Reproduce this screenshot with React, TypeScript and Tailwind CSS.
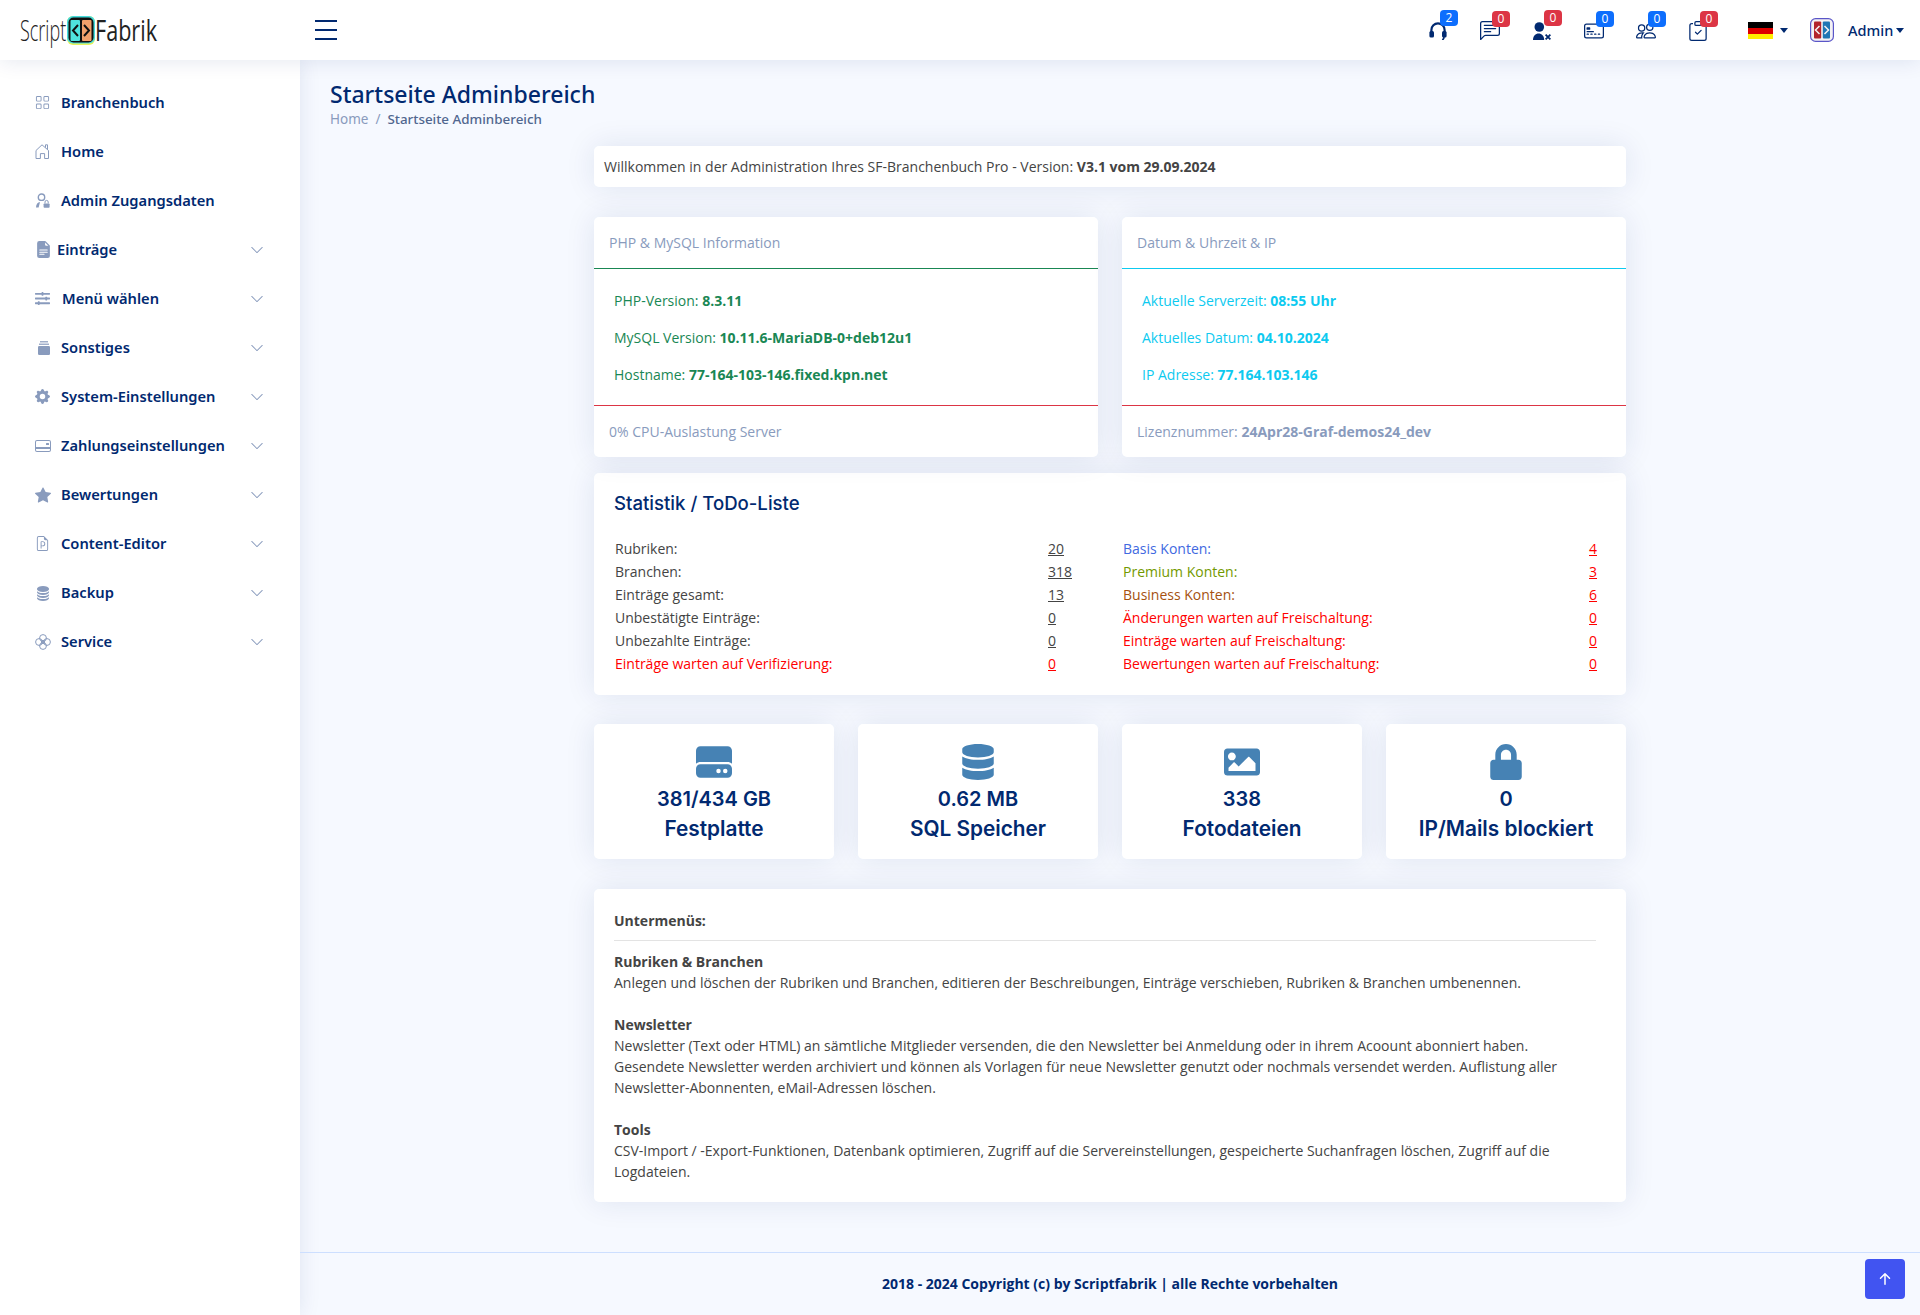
import React from "react";
import {
  BsGrid,
  BsFileEarmarkTextFill,
  BsGearFill,
  BsCreditCard2Back,
  BsStarFill,
  BsFileEarmarkPpt,
  BsDatabaseFill,
  BsChevronDown,
  BsChatLeftText,
  BsCreditCard2Front,
  BsPeople,
  BsClipboardCheck,
  BsArrowUpShort,
} from "react-icons/bs";
import { FaSlidersH, FaDatabase, FaImage, FaLock } from "react-icons/fa";
import { FaHardDrive } from "react-icons/fa6";

function HomeIcon({ size = 15 }: { size?: number }) {
  return (
    <svg viewBox="0 0 15 15" width={size} height={size} fill="none" stroke="currentColor" strokeWidth="1">
      <path d="M1 14.5V6.5L7 .8l6.5 5.7v8H9.6V9.6H5.4v4.9z" />
      <path d="M10.5 3.6V.8h2v4.6" />
    </svg>
  );
}

function PersonLockIcon({ size = 15 }: { size?: number }) {
  return (
    <svg viewBox="0 0 15 15" width={size} height={size} fill="currentColor">
      <circle cx="6.5" cy="4.2" r="3.2" fill="none" stroke="currentColor" strokeWidth="1.4" />
      <path d="M1 14.6c0-3.6 1.8-5.4 4-5.6L3.6 14.6z" />
      <rect x="8.6" y="10.4" width="6" height="4.4" rx=".8" />
      <path d="M10 10.4V9a1.6 1.6 0 0 1 3.2 0v1.4" fill="none" stroke="currentColor" strokeWidth="1" />
    </svg>
  );
}

function StackIcon({ size = 14 }: { size?: number }) {
  return (
    <svg viewBox="0 0 12 14" width={size} height={size} fill="currentColor">
      <rect x="0" y="5" width="12" height="9" rx="1.2" />
      <rect x="1" y="2.6" width="10" height="1.2" />
      <rect x="2" y="0.2" width="8" height="1.2" />
    </svg>
  );
}

function FlowerIcon({ size = 16 }: { size?: number }) {
  return (
    <svg viewBox="0 0 16 16" width={size} height={size} fill="none" stroke="currentColor" strokeWidth="1">
      <circle cx="8" cy="4" r="3.4" />
      <circle cx="8" cy="12" r="3.4" />
      <circle cx="4" cy="8" r="3.4" />
      <circle cx="12" cy="8" r="3.4" />
      <circle cx="8" cy="8" r="1.6" />
    </svg>
  );
}

function HeadsetIcon({ size = 18 }: { size?: number }) {
  return (
    <svg viewBox="0 0 18 18" width={size} height={size} fill="currentColor">
      <path d="M2.4 10V8a6.6 6.6 0 0 1 13.2 0v2" fill="none" stroke="currentColor" strokeWidth="2.2" />
      <rect x="0.4" y="9" width="4.6" height="6.5" rx="1.6" />
      <rect x="13" y="9" width="4.6" height="6.5" rx="1.6" />
      <path d="M15 15c0 1.4-.6 2.4-1.8 3" fill="none" stroke="currentColor" strokeWidth="1.6" />
    </svg>
  );
}

function PersonXIcon({ size = 18 }: { size?: number }) {
  return (
    <svg viewBox="0 0 18 18" width={size} height={size} fill="currentColor">
      <circle cx="6.3" cy="5" r="4.8" />
      <path d="M0 18c0-4 2.6-6.4 5.6-6.4s5.6 2.4 5.6 6.4z" />
      <path d="M12.6 12.6l4.8 4.8m0-4.8l-4.8 4.8" fill="none" stroke="currentColor" strokeWidth="1.8" />
    </svg>
  );
}

const navItems = [
  { label: "Branchenbuch", icon: BsGrid, box: "w-[26px]", size: 15 },
  { label: "Home", icon: HomeIcon, box: "w-[26px]", size: 15 },
  { label: "Admin Zugangsdaten", icon: PersonLockIcon, box: "w-[26px]", size: 15 },
  { label: "Einträge", icon: BsFileEarmarkTextFill, box: "w-[22px]", size: 17, sub: true },
  { label: "Menü wählen", icon: FaSlidersH, box: "w-[27px]", size: 15, sub: true },
  { label: "Sonstiges", icon: StackIcon, box: "w-[26px] pl-[2px]", size: 14, sub: true },
  { label: "System-Einstellungen", icon: BsGearFill, box: "w-[26px]", size: 15, sub: true },
  { label: "Zahlungseinstellungen", icon: BsCreditCard2Back, box: "w-[26px]", size: 16, sub: true },
  { label: "Bewertungen", icon: BsStarFill, box: "w-[26px]", size: 16, sub: true },
  { label: "Content-Editor", icon: BsFileEarmarkPpt, box: "w-[26px]", size: 15, sub: true },
  { label: "Backup", icon: BsDatabaseFill, box: "w-[26px]", size: 16, sub: true },
  { label: "Service", icon: FlowerIcon, box: "w-[26px]", size: 16, sub: true },
];

const headerIcons = [
  { icon: HeadsetIcon, count: 2, badge: "bg-[#0d6efd] top-[10px]", size: 18 },
  { icon: BsChatLeftText, count: 0, badge: "bg-[#dc3545] top-[11px]", size: 20 },
  { icon: PersonXIcon, count: 0, badge: "bg-[#dc3545] top-[10px]", size: 18 },
  { icon: BsCreditCard2Front, count: 0, badge: "bg-[#0d6efd] top-[11px]", size: 20 },
  { icon: BsPeople, count: 0, badge: "bg-[#0d6efd] top-[11px]", size: 20 },
  { icon: BsClipboardCheck, count: 0, badge: "bg-[#dc3545] top-[11px]", size: 20 },
];

const statRows = [
  { left: "Rubriken:", leftValue: "20", leftColor: "text-[#444444]", right: "Basis Konten:", rightValue: "4", rightColor: "text-[#4169e1]" },
  { left: "Branchen:", leftValue: "318", leftColor: "text-[#444444]", right: "Premium Konten:", rightValue: "3", rightColor: "text-[#739900]" },
  { left: "Einträge gesamt:", leftValue: "13", leftColor: "text-[#444444]", right: "Business Konten:", rightValue: "6", rightColor: "text-[#a5510f]" },
  { left: "Unbestätigte Einträge:", leftValue: "0", leftColor: "text-[#444444]", right: "Änderungen warten auf Freischaltung:", rightValue: "0", rightColor: "text-[#ff0000]" },
  { left: "Unbezahlte Einträge:", leftValue: "0", leftColor: "text-[#444444]", right: "Einträge warten auf Freischaltung:", rightValue: "0", rightColor: "text-[#ff0000]" },
  { left: "Einträge warten auf Verifizierung:", leftValue: "0", leftColor: "text-[#ff0000]", right: "Bewertungen warten auf Freischaltung:", rightValue: "0", rightColor: "text-[#ff0000]" },
];

const tiles = [
  { icon: FaHardDrive, value: "381/434 GB", label: "Festplatte" },
  { icon: FaDatabase, value: "0.62 MB", label: "SQL Speicher" },
  { icon: FaImage, value: "338", label: "Fotodateien" },
  { icon: FaLock, value: "0", label: "IP/Mails blockiert" },
];

const cardClass = "bg-white rounded-[5px] shadow-[0_0_30px_rgba(1,41,112,0.1)]";

function LogoMark({ className }: { className?: string }) {
  return (
    <svg viewBox="0 0 28 29" className={className}>
      <rect x="0" y="0" width="28" height="29" rx="6" fill="#e9f25a" />
      <rect x="0" y="0" width="28" height="27.5" rx="6" fill="#46dcdc" />
      <rect x="1.5" y="1.5" width="25" height="25" rx="5" fill="#111111" />
      <rect x="3.5" y="4" width="9.5" height="21" rx="1" fill="#4fe3de" />
      <rect x="15" y="4" width="9.5" height="21" rx="1" fill="#f2a06b" />
      <path d="M11 9l-5 5.5 5 5.5M17 9l5 5.5-5 5.5" fill="none" stroke="#111111" strokeWidth="2" />
    </svg>
  );
}

function Avatar() {
  return (
    <svg viewBox="0 0 24 24" className="w-6 h-6">
      <rect x="0.6" y="0.6" width="22.8" height="22.8" rx="5" fill="#f4f2f4" stroke="#5a56c8" strokeWidth="1.2" />
      <rect x="4" y="3.5" width="7.2" height="17" rx="1" fill="#b3242c" />
      <rect x="12.8" y="3.5" width="7.2" height="17" rx="1" fill="#1f76b4" />
      <path d="M9.5 8l-4 4 4 4M14.5 8l4 4-4 4" fill="none" stroke="#f4f2f4" strokeWidth="1.5" />
    </svg>
  );
}

function Caret() {
  return <span className="block w-0 h-0 border-x-4 border-t-[5px] border-x-transparent border-t-[#012970]" />;
}

function Header() {
  return (
    <header className="relative z-10 h-[60px] flex items-center bg-white shadow-[0_2px_20px_rgba(1,41,112,0.1)]">
      <div className="w-[315px] pl-5 flex items-center">
        <span className="w-[46px] block font-['Open_Sans',sans-serif] font-light text-[30px] leading-none text-[#222222] origin-left scale-x-[0.6] whitespace-nowrap">
          Script
        </span>
        <LogoMark className="w-7 h-[29px] ml-[1px]" />
        <span className="w-[62px] block font-['Open_Sans',sans-serif] text-[30px] leading-none text-[#222222] origin-left scale-x-[0.72] whitespace-nowrap">
          Fabrik
        </span>
      </div>
      <svg viewBox="0 0 22 20" className="w-[22px] h-5">
        <path d="M0 1h22M0 10h22M0 19h22" stroke="#012970" strokeWidth="2" />
      </svg>
      <div className="ml-auto flex items-center pr-4 h-full">
        {headerIcons.map((item, i) => (
          <div key={i} className="relative w-[52px] h-full flex items-center justify-center pt-[1px] text-[#012970]">
            <item.icon size={item.size} />
            <span className={`absolute left-7 w-[18px] h-4 rounded-[4px] flex items-center justify-center text-white text-[12px] leading-none ${item.badge}`}>
              {item.count}
            </span>
          </div>
        ))}
        <svg viewBox="0 0 25 17" className="ml-6 w-[25px] h-[17px]">
          <rect width="25" height="6" fill="#000000" />
          <rect y="6" width="25" height="6" fill="#dd0000" />
          <rect y="12" width="25" height="5" fill="#ffee00" />
        </svg>
        <span className="ml-[7px]">
          <Caret />
        </span>
        <span className="ml-[22px]">
          <Avatar />
        </span>
        <span className="ml-[14px] w-12 text-[14.5px] font-medium text-[#012970] font-['Noto_Sans',sans-serif]">Admin</span>
        <Caret />
      </div>
    </header>
  );
}

function Sidebar() {
  return (
    <aside className="w-[300px] shrink-0 bg-white px-5 pt-[18px] shadow-[0_0_20px_rgba(1,41,112,0.1)]">
      {navItems.map((item) => (
        <div key={item.label} className="h-[49px] flex items-center pl-[15px] pr-[16px]">
          <span className={`${item.box} shrink-0 text-[#899bbd]`}>
            <item.icon size={item.size} />
          </span>
          <span className="text-[14.7px] font-semibold text-[#012970] font-['Noto_Sans',sans-serif]">{item.label}</span>
          {item.sub && <BsChevronDown size={14} className="ml-auto text-[#899bbd]" />}
        </div>
      ))}
    </aside>
  );
}

function InfoCard({
  title,
  lineColor,
  textColor,
  rows,
  footer,
}: {
  title: string;
  lineColor: string;
  textColor: string;
  rows: [string, string][];
  footer: React.ReactNode;
}) {
  return (
    <div className={`${cardClass} h-[240px] flex flex-col`}>
      <div className={`h-[52px] flex items-center px-[15px] border-b ${lineColor} text-[#899bbd]`}>{title}</div>
      <div className={`h-[136px] pt-[13px] pl-5 ${textColor}`}>
        {rows.map(([k, v]) => (
          <div key={k} className="h-[37px] flex items-center">
            <span>
              {k} <b className="font-bold">{v}</b>
            </span>
          </div>
        ))}
      </div>
      <div className="flex-1 flex items-center px-[15px] border-t border-[#dc3545] text-[#899bbd]">{footer}</div>
    </div>
  );
}

export default function App() {
  return (
    <div className="min-h-screen flex flex-col bg-[#f6f9ff] text-[14px] leading-[21px] text-[#444444] font-['Open_Sans',sans-serif]">
      <Header />
      <div className="flex flex-1">
        <Sidebar />
        <div className="flex-1 flex flex-col">
          <main className="flex-1 px-[30px] pt-[19px]">
            <h1 className="text-[23px] leading-[30px] font-medium text-[#012970] font-['Noto_Sans',sans-serif]">
              Startseite Adminbereich
            </h1>
            <div className="flex gap-[7px] text-[13.5px] text-[#899bbd] font-['Noto_Sans',sans-serif]">
              <span>Home</span>
              <span>/</span>
              <span className="text-[13.4px] text-[#51678f] font-medium">Startseite Adminbereich</span>
            </div>
            <div className="mx-auto w-[1032px] mt-[16px]">
              <div className={`${cardClass} h-[41px] flex items-center px-[10px]`}>
                <span>
                  Willkommen in der Administration Ihres SF-Branchenbuch Pro - Version:{" "}
                  <b className="font-bold">V3.1 vom 29.09.2024</b>
                </span>
              </div>

              <div className="mt-[30px] grid grid-cols-2 gap-6">
                <InfoCard
                  title="PHP & MySQL Information"
                  lineColor="border-[#198754]"
                  textColor="text-[#198754]"
                  rows={[
                    ["PHP-Version:", "8.3.11"],
                    ["MySQL Version:", "10.11.6-MariaDB-0+deb12u1"],
                    ["Hostname:", "77-164-103-146.fixed.kpn.net"],
                  ]}
                  footer="0% CPU-Auslastung Server"
                />
                <InfoCard
                  title="Datum & Uhrzeit & IP"
                  lineColor="border-[#0dcaf0]"
                  textColor="text-[#0dcaf0]"
                  rows={[
                    ["Aktuelle Serverzeit:", "08:55 Uhr"],
                    ["Aktuelles Datum:", "04.10.2024"],
                    ["IP Adresse:", "77.164.103.146"],
                  ]}
                  footer={
                    <span>
                      Lizenznummer: <b className="font-bold">24Apr28-Graf-demos24_dev</b>
                    </span>
                  }
                />
              </div>

              <div className={`${cardClass} mt-4 h-[222px] pt-[17px] pl-5 pr-[30px]`}>
                <h2 className="text-[18.6px] leading-[27px] font-medium text-[#012970] font-['Inter',sans-serif]">
                  Statistik / ToDo-Liste
                </h2>
                <div className="mt-[20px] ml-[1px] grid grid-cols-[433px_75px_466px_auto] auto-rows-[23px] items-center">
                  {statRows.map((row) => (
                    <React.Fragment key={row.right}>
                      <span className={row.leftColor}>{row.left}</span>
                      <span className={`underline ${row.leftColor}`}>{row.leftValue}</span>
                      <span className={row.rightColor}>{row.right}</span>
                      <span className="underline text-[#ff0000]">{row.rightValue}</span>
                    </React.Fragment>
                  ))}
                </div>
              </div>

              <div className="mt-[29px] grid grid-cols-4 gap-6">
                {tiles.map((tile) => (
                  <div key={tile.label} className={`${cardClass} h-[135px] pt-5 flex flex-col items-center text-[#012970] font-['Inter',sans-serif] font-semibold text-[20px] leading-[30px]`}>
                    <tile.icon size={36} className="text-[#4682b4] mb-[4px]" />
                    <span>{tile.value}</span>
                    <span className="text-[20.8px]">{tile.label}</span>
                  </div>
                ))}
              </div>

              <div className={`${cardClass} mt-[30px] h-[313px] pt-[21px] pl-5 pr-[30px]`}>
                <b className="font-bold block">Untermenüs:</b>
                <hr className="mt-[9px] mb-[10px] border-[#e3e3e3]" />
                <b className="font-bold">Rubriken &amp; Branchen</b>
                <br />
                Anlegen und löschen der Rubriken und Branchen, editieren der Beschreibungen, Einträge verschieben, Rubriken &amp; Branchen umbenennen.
                <br />
                <br />
                <b className="font-bold">Newsletter</b>
                <br />
                Newsletter (Text oder HTML) an sämtliche Mitglieder versenden, die den Newsletter bei Anmeldung oder in ihrem Acoount abonniert haben.
                <br />
                Gesendete Newsletter werden archiviert und können als Vorlagen für neue Newsletter genutzt oder nochmals versendet werden. Auflistung aller
                <br />
                Newsletter-Abonnenten, eMail-Adressen löschen.
                <br />
                <br />
                <b className="font-bold">Tools</b>
                <br />
                CSV-Import / -Export-Funktionen, Datenbank optimieren, Zugriff auf die Servereinstellungen, gespeicherte Suchanfragen löschen, Zugriff auf die
                <br />
                Logdateien.
              </div>
            </div>
          </main>
          <footer className="mt-[50px] h-[63px] pb-[2px] flex items-center justify-center border-t border-[#cddfff] font-bold text-[#012970]">
            2018 - 2024 Copyright (c) by Scriptfabrik | alle Rechte vorbehalten
          </footer>
        </div>
      </div>
      <button className="fixed right-[15px] bottom-4 w-10 h-10 rounded-[4px] bg-[#4154f1] flex items-center justify-center text-white">
        <BsArrowUpShort size={24} />
      </button>
    </div>
  );
}
